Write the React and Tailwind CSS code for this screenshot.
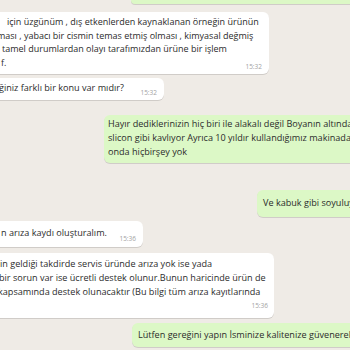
import React from "react";

const white = "bg-white shadow-[0_1px_0.5px_rgba(0,0,0,0.13)]";
const green = "bg-[#dcf8c6] shadow-[0_1px_0.5px_rgba(0,0,0,0.13)]";

function Time({ children, className = "" }) {
  return <span className={`text-[6.5px] leading-[8px] text-[#a3a3a3] whitespace-nowrap ${className}`}>{children}</span>;
}

export default function App() {
  return (
    <div className="w-[350px] h-[350px] overflow-hidden bg-[#efebe6] flex flex-col font-['Open_Sans',sans-serif] text-[9.1px] text-[#2b2b2b]">
      {/* tail of previous outgoing bubble */}
      <div className={`h-[4px] ml-[131px] -mr-[20px] shrink-0 rounded-b-[6px] ${green}`} />

      {/* incoming 1 */}
      <div className={`mt-[8px] -ml-[20px] w-[289px] h-[62px] shrink-0 rounded-[6px] pt-[3px] pr-[7px] flex flex-col whitespace-nowrap text-[9px] leading-[13.5px] ${white}`}>
        <div className="pl-[27px]">için üzgünüm , dış etkenlerden kaynaklanan örneğin ürünün</div>
        <div className="pl-[17px]">ması , yabacı bir cismin temas etmiş olması , kimyasal değmiş</div>
        <div className="pl-[22px]">tamel durumlardan olayı tarafımızdan ürüne bir işlem</div>
        <div className="flex items-end justify-between">
          <span className="pl-[21px]">f.</span>
          <Time className="translate-y-[2px]">15:32</Time>
        </div>
      </div>

      {/* incoming 2 */}
      <div className={`mt-[4px] -ml-[20px] w-[184px] h-[22px] shrink-0 rounded-[6px] pt-[3px] pr-[7px] flex items-end justify-between whitespace-nowrap ${white}`}>
        <span className="pl-[19px] self-start leading-[14px]">ğiniz farklı bir konu var mıdır?</span>
        <Time className="mb-[3px]">15:32</Time>
      </div>

      {/* outgoing 1 */}
      <div className={`mt-[15px] ml-[104px] -mr-[40px] h-[48px] shrink-0 rounded-[6px] pt-[2px] pl-[4px] whitespace-nowrap leading-[14px] ${green}`}>
        <div>Hayır dediklerinizin hiç biri ile alakalı değil Boyanın altından</div>
        <div>slicon gibi kavlıyor Ayrıca 10 yıldır kullandığımız makinada</div>
        <div>onda hiçbirşey yok</div>
      </div>

      {/* outgoing 2 */}
      <div className={`mt-[27px] ml-[257px] -mr-[40px] h-[27px] shrink-0 rounded-[6px] pt-[6px] pl-[6px] whitespace-nowrap leading-[14px] ${green}`}>
        Ve kabuk gibi soyuluyor
      </div>

      {/* incoming 3 */}
      <div className={`mt-[4px] -ml-[20px] w-[163px] h-[26px] shrink-0 rounded-[6px] pt-[5px] pr-[7px] flex items-end justify-between whitespace-nowrap ${white}`}>
        <span className="pl-[21px] self-start leading-[14px]">n arıza kaydı oluşturalım.</span>
        <Time className="mb-[4px]">15:36</Time>
      </div>

      {/* incoming 4 */}
      <div className={`mt-[6px] -ml-[20px] w-[294px] h-[65px] shrink-0 rounded-[6px] pt-[4px] pr-[6px] flex flex-col whitespace-nowrap leading-[14px] ${white}`}>
        <div className="pl-[20px]">in geldiği takdirde servis üründe arıza yok ise yada</div>
        <div className="pl-[19px]">bir sorun var ise ücretli destek olunur.Bunun haricinde ürün de</div>
        <div className="pl-[18px]">kapsamında destek olunacaktır (Bu bilgi tüm arıza kayıtlarında</div>
        <div className="flex justify-end mt-[3px]">
          <Time>15:36</Time>
        </div>
      </div>

      {/* outgoing 3 */}
      <div className={`mt-[5px] ml-[132px] -mr-[60px] h-[24px] shrink-0 rounded-[6px] pt-[5px] pl-[6px] whitespace-nowrap leading-[14px] ${green}`}>
        Lütfen gereğini yapın İsminize kalitenize güvenerek aldık
      </div>
    </div>
  );
}
